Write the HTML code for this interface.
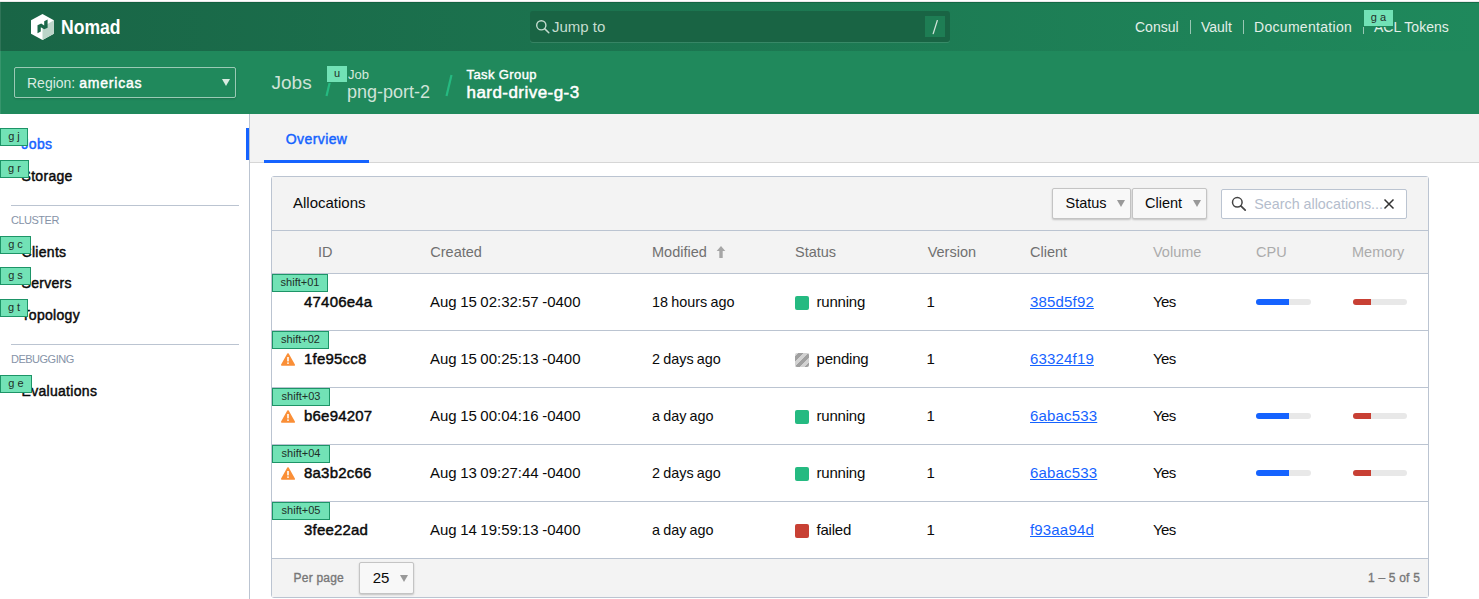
<!DOCTYPE html>
<html><head><meta charset="utf-8"><title>Nomad</title>
<style>
html,body{margin:0;padding:0;}
body{width:1479px;height:599px;overflow:hidden;position:relative;background:#fff;font-family:"Liberation Sans",sans-serif;}
.t{position:absolute;white-space:nowrap;}
.r{position:absolute;}
.bd{position:absolute;background:#72e2b6;border:1px solid #1d9467;color:#1f2f28;text-align:center;font-family:"Liberation Sans",sans-serif;white-space:nowrap;}
u{text-decoration-thickness:1px;text-underline-offset:1px;}
</style></head><body>
<div class="r" style="left:0px;top:0px;width:1479px;height:1px;background:#ffffff"></div>
<div class="r" style="left:0px;top:1px;width:1479px;height:1px;background:#ebe8ea"></div>
<div class="r" style="left:0px;top:2px;width:1479px;height:49px;background:linear-gradient(to right,#196546 0%,#1f895c 100%)"></div>
<div class="r" style="left:0px;top:2px;width:1479px;height:1px;background:#0f5a3a;opacity:.6"></div>
<svg class="r" style="left:28px;top:12px" width="30" height="30" viewBox="0 0 30 30">
<polygon points="14.5,2 25.8,8.3 25.8,21.8 14.5,28 3,21.8 3,8.3" fill="#ffffff"/>
<polygon points="14.5,15 25.8,8.3 25.8,21.8 14.5,28" fill="#bcd5c9"/>
<path d="M9.5,21.2 L9.5,13.2 L13.2,11.5 L16.2,13.4 L16.2,9.2 L19.6,7.6 L19.6,15.7 L16.2,17.3 L12.8,15.2 L12.8,19.6 Z" fill="#1a6748"/>
</svg>
<div class="t " style="left:61px;top:15.07px;font-size:20px;line-height:24px;font-weight:700;color:#ffffff;transform:scaleX(0.878);transform-origin:0 0">Nomad</div>
<div class="r" style="left:530px;top:11px;width:420px;height:31px;background:#196444;border-radius:3px;box-shadow:0 1px 0 rgba(255,255,255,0.12)"></div>
<svg class="r" style="left:535px;top:19px" width="16" height="16" viewBox="0 0 16 16">
<circle cx="6.3" cy="6.3" r="4.6" fill="none" stroke="#c5dccf" stroke-width="1.4"/>
<line x1="9.6" y1="9.6" x2="13.8" y2="13.8" stroke="#c5dccf" stroke-width="1.5" stroke-linecap="round"/>
</svg>
<div class="t " style="left:552px;top:17.80px;font-size:15px;line-height:18px;font-weight:400;color:#c5dccf;">Jump to</div>
<div class="r" style="left:925px;top:16px;width:20px;height:21px;background:#1e7d54"></div>
<svg class="r" style="left:925px;top:16px" width="20" height="21" viewBox="0 0 20 21"><line x1="12.3" y1="4.6" x2="8.2" y2="17.6" stroke="#d2e4da" stroke-width="1.3" stroke-linecap="round"/></svg>
<div class="t " style="left:1135px;top:19.45px;font-size:14px;line-height:17px;font-weight:400;color:#e3efe8;">Consul</div>
<div class="r" style="left:1190px;top:20px;width:1px;height:14px;background:rgba(255,255,255,.55)"></div>
<div class="t " style="left:1201px;top:19.45px;font-size:14px;line-height:17px;font-weight:400;color:#e3efe8;">Vault</div>
<div class="r" style="left:1243px;top:20px;width:1px;height:14px;background:rgba(255,255,255,.55)"></div>
<div class="t " style="left:1254px;top:19.45px;font-size:14px;line-height:17px;font-weight:400;color:#e3efe8;letter-spacing:0.3px">Documentation</div>
<div class="r" style="left:1363px;top:20px;width:1px;height:14px;background:rgba(255,255,255,.55)"></div>
<div class="t " style="left:1374px;top:19.45px;font-size:14px;line-height:17px;font-weight:400;color:#e3efe8;">ACL Tokens</div>
<div class="bd" style="left:1363px;top:9px;width:29px;height:16px;font-size:11px;line-height:16px;border-color:#1f8659;"><span style="position:relative;top:-0.8px">g a</span></div>
<div class="r" style="left:0px;top:51px;width:1479px;height:63px;background:#20895c"></div>
<div class="r" style="left:14px;top:67px;width:222px;height:31px;border:1px solid rgba(255,255,255,.55);border-radius:2px;box-sizing:border-box;box-shadow:0 1px 2px rgba(0,0,0,.15)"></div>
<div class="t " style="left:27px;top:74.65px;font-size:14px;line-height:17px;font-weight:400;color:#d9ebe1;">Region: <span style="color:#fff;letter-spacing:0.8px;-webkit-text-stroke:0.45px #fff">americas</span></div>
<svg class="r" style="left:222px;top:79px" width="8" height="7" viewBox="0 0 8 7"><polygon points="0,0 8,0 4,7" fill="#d9ebe1"/></svg>
<div class="t " style="left:271.5px;top:71.11px;font-size:19px;line-height:23px;font-weight:400;color:#cfe3d8;">Jobs</div>
<svg class="r" style="left:324px;top:74px" width="10" height="23" viewBox="0 0 10 23"><line x1="7.5" y1="1" x2="2.5" y2="22" stroke="#25ba81" stroke-width="2.2"/></svg>
<div class="t " style="left:348px;top:67.49px;font-size:13px;line-height:16px;font-weight:400;color:#d6e9de;">Job</div>
<div class="t " style="left:347px;top:80.76px;font-size:18px;line-height:22px;font-weight:400;color:#cfe3d8;">png-port-2</div>
<div class="bd" style="left:326px;top:65px;width:20px;height:16px;font-size:11px;line-height:16px;border-color:#20895c;"><span style="position:relative;top:-0.8px">u</span></div>
<svg class="r" style="left:444px;top:74px" width="10" height="23" viewBox="0 0 10 23"><line x1="7.5" y1="1" x2="2.5" y2="22" stroke="#25ba81" stroke-width="2.2"/></svg>
<div class="t " style="left:466.5px;top:67.49px;font-size:13px;line-height:16px;font-weight:400;color:#ffffff;-webkit-text-stroke:0.4px #ffffff;letter-spacing:0.4px">Task Group</div>
<div class="t " style="left:466.5px;top:83.11px;font-size:17px;line-height:20px;font-weight:400;color:#ffffff;-webkit-text-stroke:0.5px #ffffff;letter-spacing:0.45px">hard-drive-g-3</div>
<div class="r" style="left:0px;top:2px;width:1px;height:112px;background:rgba(255,255,255,.1)"></div>
<div class="r" style="left:249px;top:114px;width:1px;height:485px;background:#bbc4d1"></div>
<div class="r" style="left:246px;top:128px;width:3px;height:32px;background:#1563ff"></div>
<div class="t " style="left:21.5px;top:136.35px;font-size:14px;line-height:17px;font-weight:400;color:#1563ff;-webkit-text-stroke:0.45px #1563ff;letter-spacing:0.3px">Jobs</div>
<div class="bd" style="left:0px;top:128px;width:26px;height:16px;font-size:11px;line-height:16px;"><span style="position:relative;top:-0.8px">g j</span></div>
<div class="t " style="left:21.5px;top:168.45px;font-size:14px;line-height:17px;font-weight:400;color:#0a0a0a;-webkit-text-stroke:0.45px #0a0a0a;letter-spacing:0.3px">Storage</div>
<div class="bd" style="left:0px;top:160px;width:27px;height:16px;font-size:11px;line-height:16px;"><span style="position:relative;top:-0.8px">g r</span></div>
<div class="r" style="left:11px;top:205px;width:228px;height:1px;background:#bbc4d1"></div>
<div class="t " style="left:11px;top:213.99px;font-size:11px;line-height:13px;font-weight:400;color:#8693a8;letter-spacing:-0.5px">CLUSTER</div>
<div class="t " style="left:21.5px;top:243.95px;font-size:14px;line-height:17px;font-weight:400;color:#0a0a0a;-webkit-text-stroke:0.45px #0a0a0a;letter-spacing:0.3px">Clients</div>
<div class="bd" style="left:0px;top:236px;width:29px;height:16px;font-size:11px;line-height:16px;"><span style="position:relative;top:-0.8px">g c</span></div>
<div class="t " style="left:21.5px;top:275.45px;font-size:14px;line-height:17px;font-weight:400;color:#0a0a0a;-webkit-text-stroke:0.45px #0a0a0a;letter-spacing:0.3px">Servers</div>
<div class="bd" style="left:0px;top:267px;width:29px;height:16px;font-size:11px;line-height:16px;"><span style="position:relative;top:-0.8px">g s</span></div>
<div class="t " style="left:21.5px;top:306.95px;font-size:14px;line-height:17px;font-weight:400;color:#0a0a0a;-webkit-text-stroke:0.45px #0a0a0a;letter-spacing:0.3px">Topology</div>
<div class="bd" style="left:0px;top:299px;width:26px;height:16px;font-size:11px;line-height:16px;"><span style="position:relative;top:-0.8px">g t</span></div>
<div class="r" style="left:11px;top:344px;width:228px;height:1px;background:#bbc4d1"></div>
<div class="t " style="left:11px;top:352.59px;font-size:11px;line-height:13px;font-weight:400;color:#8693a8;letter-spacing:-0.5px">DEBUGGING</div>
<div class="t " style="left:21.5px;top:382.65px;font-size:14px;line-height:17px;font-weight:400;color:#0a0a0a;-webkit-text-stroke:0.45px #0a0a0a;letter-spacing:0.3px">Evaluations</div>
<div class="bd" style="left:0px;top:375px;width:30px;height:16px;font-size:11px;line-height:16px;"><span style="position:relative;top:-0.8px">g e</span></div>
<div class="r" style="left:250px;top:114px;width:1229px;height:48px;background:#f3f3f3"></div>
<div class="r" style="left:250px;top:162px;width:1229px;height:1px;background:#d6d6d6"></div>
<div class="r" style="left:264px;top:160px;width:105px;height:3px;background:#1563ff"></div>
<div class="t " style="left:285.8px;top:131.45px;font-size:14px;line-height:17px;font-weight:400;color:#1563ff;-webkit-text-stroke:0.45px #1563ff;letter-spacing:0.4px">Overview</div>
<div class="r" style="left:271px;top:176px;width:1158px;height:422px;border:1px solid #bbc4d1;border-radius:3px;box-sizing:border-box;background:#fff;overflow:hidden"></div>
<div class="r" style="left:272px;top:177px;width:1156px;height:54px;background:#f3f3f3"></div>
<div class="t " style="left:293px;top:193.80px;font-size:15px;line-height:18px;font-weight:400;color:#0a0a0a;">Allocations</div>
<div class="r" style="left:1052px;top:188px;width:79px;height:31px;background:#f8f8f8;border:1px solid #c4c4c4;border-radius:2px;box-sizing:border-box;box-shadow:0 1px 2px rgba(0,0,0,.2)"></div>
<div class="t " style="left:1065.5px;top:195.47px;font-size:14.5px;line-height:17px;font-weight:400;color:#0a0a0a;">Status</div>
<svg class="r" style="left:1117px;top:200px" width="8" height="7" viewBox="0 0 8 7"><polygon points="0,0 8,0 4,7" fill="#999"/></svg>
<div class="r" style="left:1132px;top:188px;width:75px;height:31px;background:#f8f8f8;border:1px solid #c4c4c4;border-radius:2px;box-sizing:border-box;box-shadow:0 1px 2px rgba(0,0,0,.2)"></div>
<div class="t " style="left:1145px;top:195.47px;font-size:14.5px;line-height:17px;font-weight:400;color:#0a0a0a;">Client</div>
<svg class="r" style="left:1193px;top:200px" width="8" height="7" viewBox="0 0 8 7"><polygon points="0,0 8,0 4,7" fill="#999"/></svg>
<div class="r" style="left:1221px;top:189px;width:186px;height:30px;background:#fff;border:1px solid #bbc4d1;border-radius:2px;box-sizing:border-box"></div>
<svg class="r" style="left:1231px;top:196px" width="16" height="16" viewBox="0 0 16 16">
<circle cx="6.3" cy="6.3" r="4.8" fill="none" stroke="#444" stroke-width="1.5"/>
<line x1="9.8" y1="9.8" x2="14.2" y2="14.2" stroke="#444" stroke-width="1.7" stroke-linecap="round"/>
</svg>
<div class="t " style="left:1254.3px;top:196.04px;font-size:14.3px;line-height:17px;font-weight:400;color:#b4bdcc;">Search allocations...</div>
<svg class="r" style="left:1383px;top:198px" width="12" height="12" viewBox="0 0 12 12"><path d="M1.5,1.5 L10.5,10.5 M10.5,1.5 L1.5,10.5" stroke="#333" stroke-width="1.5"/></svg>
<div class="r" style="left:272px;top:230px;width:1156px;height:1px;background:#bbc4d1"></div>
<div class="r" style="left:272px;top:231px;width:1156px;height:42px;background:#f3f3f3"></div>
<div class="r" style="left:272px;top:273px;width:1156px;height:1px;background:#bbc4d1"></div>
<div class="t " style="left:318px;top:244.47px;font-size:14.5px;line-height:17px;font-weight:400;color:#707070;">ID</div>
<div class="t " style="left:430.3px;top:244.47px;font-size:14.5px;line-height:17px;font-weight:400;color:#707070;">Created</div>
<div class="t " style="left:652px;top:244.47px;font-size:14.5px;line-height:17px;font-weight:400;color:#707070;">Modified</div>
<svg class="r" style="left:716px;top:246px" width="10" height="12" viewBox="0 0 10 12"><polygon points="5,0 9.3,5 6.7,5 6.7,12 3.3,12 3.3,5 0.7,5" fill="#a6a6a6"/></svg>
<div class="t " style="left:795px;top:244.47px;font-size:14.5px;line-height:17px;font-weight:400;color:#707070;">Status</div>
<div class="t " style="left:927.7px;top:244.47px;font-size:14.5px;line-height:17px;font-weight:400;color:#707070;">Version</div>
<div class="t " style="left:1030px;top:244.47px;font-size:14.5px;line-height:17px;font-weight:400;color:#707070;">Client</div>
<div class="t " style="left:1153px;top:244.47px;font-size:14.5px;line-height:17px;font-weight:400;color:#ababab;">Volume</div>
<div class="t " style="left:1256px;top:244.47px;font-size:14.5px;line-height:17px;font-weight:400;color:#ababab;">CPU</div>
<div class="t " style="left:1352px;top:244.47px;font-size:14.5px;line-height:17px;font-weight:400;color:#ababab;">Memory</div>
<div class="bd" style="left:272px;top:274px;width:54px;height:16px;font-size:11px;line-height:16px;"><span style="position:relative;top:-0.8px">shift+01</span></div>
<div class="t " style="left:304px;top:292.80px;font-size:15px;line-height:18px;font-weight:400;color:#0a0a0a;-webkit-text-stroke:0.45px #0a0a0a;letter-spacing:0.2px">47406e4a</div>
<div class="t " style="left:430px;top:292.80px;font-size:15px;line-height:18px;font-weight:400;color:#0a0a0a;word-spacing:-0.7px">Aug 15 02:32:57 -0400</div>
<div class="t " style="left:652px;top:293.51px;font-size:14.4px;line-height:17px;font-weight:400;color:#0a0a0a;word-spacing:-0.8px">18 hours ago</div>
<div class="r" style="left:795px;top:296px;width:14px;height:14px;background:#25ba81;border-radius:2px"></div>
<div class="t " style="left:816.5px;top:292.80px;font-size:15px;line-height:18px;font-weight:400;color:#0a0a0a;letter-spacing:-0.2px">running</div>
<div class="t " style="left:926.5px;top:292.80px;font-size:15px;line-height:18px;font-weight:400;color:#0a0a0a;">1</div>
<div class="t " style="left:1030px;top:292.80px;font-size:15px;line-height:18px;font-weight:400;color:#1563ff;letter-spacing:0.17px"><u>385d5f92</u></div>
<div class="t " style="left:1153px;top:292.80px;font-size:15px;line-height:18px;font-weight:400;color:#0a0a0a;letter-spacing:-0.6px">Yes</div>
<div class="r" style="left:1256px;top:299px;width:55px;height:6px;background:#e8e8e8;border-radius:3px;overflow:hidden"></div>
<div class="r" style="left:1256px;top:299px;width:33px;height:6px;background:#1563ff;border-radius:3px 0 0 3px"></div>
<div class="r" style="left:1353px;top:299px;width:54px;height:6px;background:#e8e8e8;border-radius:3px"></div>
<div class="r" style="left:1353px;top:299px;width:18px;height:6px;background:#c84034;border-radius:3px 0 0 3px"></div>
<div class="r" style="left:272px;top:330px;width:1156px;height:1px;background:#bbc4d1"></div>
<div class="bd" style="left:272px;top:331px;width:55px;height:16px;font-size:11px;line-height:16px;"><span style="position:relative;top:-0.8px">shift+02</span></div>
<svg class="r" style="left:281px;top:353px" width="14" height="13" viewBox="0 0 14 13"><path d="M7,1 L13.2,12 L0.8,12 Z" fill="#fa8f37" stroke="#fa8f37" stroke-width="1.6" stroke-linejoin="round"/><rect x="6.2" y="4" width="1.6" height="4.4" fill="#fff"/><rect x="6.2" y="9.4" width="1.6" height="1.5" fill="#fff"/></svg>
<div class="t " style="left:304px;top:349.80px;font-size:15px;line-height:18px;font-weight:400;color:#0a0a0a;-webkit-text-stroke:0.45px #0a0a0a;letter-spacing:0.2px">1fe95cc8</div>
<div class="t " style="left:430px;top:349.80px;font-size:15px;line-height:18px;font-weight:400;color:#0a0a0a;word-spacing:-0.7px">Aug 15 00:25:13 -0400</div>
<div class="t " style="left:652px;top:350.51px;font-size:14.4px;line-height:17px;font-weight:400;color:#0a0a0a;word-spacing:-0.8px">2 days ago</div>
<div class="r" style="left:795px;top:353px;width:14px;height:14px;background:repeating-linear-gradient(-45deg,#a0a0a0 0 3.4px,#d2d2d2 3.4px 6.8px);border-radius:2px"></div>
<div class="t " style="left:816.5px;top:349.80px;font-size:15px;line-height:18px;font-weight:400;color:#0a0a0a;letter-spacing:-0.2px">pending</div>
<div class="t " style="left:926.5px;top:349.80px;font-size:15px;line-height:18px;font-weight:400;color:#0a0a0a;">1</div>
<div class="t " style="left:1030px;top:349.80px;font-size:15px;line-height:18px;font-weight:400;color:#1563ff;letter-spacing:0.17px"><u>63324f19</u></div>
<div class="t " style="left:1153px;top:349.80px;font-size:15px;line-height:18px;font-weight:400;color:#0a0a0a;letter-spacing:-0.6px">Yes</div>
<div class="r" style="left:272px;top:387px;width:1156px;height:1px;background:#bbc4d1"></div>
<div class="bd" style="left:272px;top:388px;width:56px;height:16px;font-size:11px;line-height:16px;"><span style="position:relative;top:-0.8px">shift+03</span></div>
<svg class="r" style="left:281px;top:410px" width="14" height="13" viewBox="0 0 14 13"><path d="M7,1 L13.2,12 L0.8,12 Z" fill="#fa8f37" stroke="#fa8f37" stroke-width="1.6" stroke-linejoin="round"/><rect x="6.2" y="4" width="1.6" height="4.4" fill="#fff"/><rect x="6.2" y="9.4" width="1.6" height="1.5" fill="#fff"/></svg>
<div class="t " style="left:304px;top:406.80px;font-size:15px;line-height:18px;font-weight:400;color:#0a0a0a;-webkit-text-stroke:0.45px #0a0a0a;letter-spacing:0.2px">b6e94207</div>
<div class="t " style="left:430px;top:406.80px;font-size:15px;line-height:18px;font-weight:400;color:#0a0a0a;word-spacing:-0.7px">Aug 15 00:04:16 -0400</div>
<div class="t " style="left:652px;top:407.51px;font-size:14.4px;line-height:17px;font-weight:400;color:#0a0a0a;word-spacing:-0.8px">a day ago</div>
<div class="r" style="left:795px;top:410px;width:14px;height:14px;background:#25ba81;border-radius:2px"></div>
<div class="t " style="left:816.5px;top:406.80px;font-size:15px;line-height:18px;font-weight:400;color:#0a0a0a;letter-spacing:-0.2px">running</div>
<div class="t " style="left:926.5px;top:406.80px;font-size:15px;line-height:18px;font-weight:400;color:#0a0a0a;">1</div>
<div class="t " style="left:1030px;top:406.80px;font-size:15px;line-height:18px;font-weight:400;color:#1563ff;letter-spacing:0.17px"><u>6abac533</u></div>
<div class="t " style="left:1153px;top:406.80px;font-size:15px;line-height:18px;font-weight:400;color:#0a0a0a;letter-spacing:-0.6px">Yes</div>
<div class="r" style="left:1256px;top:413px;width:55px;height:6px;background:#e8e8e8;border-radius:3px;overflow:hidden"></div>
<div class="r" style="left:1256px;top:413px;width:33px;height:6px;background:#1563ff;border-radius:3px 0 0 3px"></div>
<div class="r" style="left:1353px;top:413px;width:54px;height:6px;background:#e8e8e8;border-radius:3px"></div>
<div class="r" style="left:1353px;top:413px;width:18px;height:6px;background:#c84034;border-radius:3px 0 0 3px"></div>
<div class="r" style="left:272px;top:444px;width:1156px;height:1px;background:#bbc4d1"></div>
<div class="bd" style="left:272px;top:445px;width:56px;height:16px;font-size:11px;line-height:16px;"><span style="position:relative;top:-0.8px">shift+04</span></div>
<svg class="r" style="left:281px;top:467px" width="14" height="13" viewBox="0 0 14 13"><path d="M7,1 L13.2,12 L0.8,12 Z" fill="#fa8f37" stroke="#fa8f37" stroke-width="1.6" stroke-linejoin="round"/><rect x="6.2" y="4" width="1.6" height="4.4" fill="#fff"/><rect x="6.2" y="9.4" width="1.6" height="1.5" fill="#fff"/></svg>
<div class="t " style="left:304px;top:463.80px;font-size:15px;line-height:18px;font-weight:400;color:#0a0a0a;-webkit-text-stroke:0.45px #0a0a0a;letter-spacing:0.2px">8a3b2c66</div>
<div class="t " style="left:430px;top:463.80px;font-size:15px;line-height:18px;font-weight:400;color:#0a0a0a;word-spacing:-0.7px">Aug 13 09:27:44 -0400</div>
<div class="t " style="left:652px;top:464.51px;font-size:14.4px;line-height:17px;font-weight:400;color:#0a0a0a;word-spacing:-0.8px">2 days ago</div>
<div class="r" style="left:795px;top:467px;width:14px;height:14px;background:#25ba81;border-radius:2px"></div>
<div class="t " style="left:816.5px;top:463.80px;font-size:15px;line-height:18px;font-weight:400;color:#0a0a0a;letter-spacing:-0.2px">running</div>
<div class="t " style="left:926.5px;top:463.80px;font-size:15px;line-height:18px;font-weight:400;color:#0a0a0a;">1</div>
<div class="t " style="left:1030px;top:463.80px;font-size:15px;line-height:18px;font-weight:400;color:#1563ff;letter-spacing:0.17px"><u>6abac533</u></div>
<div class="t " style="left:1153px;top:463.80px;font-size:15px;line-height:18px;font-weight:400;color:#0a0a0a;letter-spacing:-0.6px">Yes</div>
<div class="r" style="left:1256px;top:470px;width:55px;height:6px;background:#e8e8e8;border-radius:3px;overflow:hidden"></div>
<div class="r" style="left:1256px;top:470px;width:33px;height:6px;background:#1563ff;border-radius:3px 0 0 3px"></div>
<div class="r" style="left:1353px;top:470px;width:54px;height:6px;background:#e8e8e8;border-radius:3px"></div>
<div class="r" style="left:1353px;top:470px;width:18px;height:6px;background:#c84034;border-radius:3px 0 0 3px"></div>
<div class="r" style="left:272px;top:501px;width:1156px;height:1px;background:#bbc4d1"></div>
<div class="bd" style="left:272px;top:502px;width:56px;height:16px;font-size:11px;line-height:16px;"><span style="position:relative;top:-0.8px">shift+05</span></div>
<div class="t " style="left:304px;top:520.80px;font-size:15px;line-height:18px;font-weight:400;color:#0a0a0a;-webkit-text-stroke:0.45px #0a0a0a;letter-spacing:0.2px">3fee22ad</div>
<div class="t " style="left:430px;top:520.80px;font-size:15px;line-height:18px;font-weight:400;color:#0a0a0a;word-spacing:-0.7px">Aug 14 19:59:13 -0400</div>
<div class="t " style="left:652px;top:521.51px;font-size:14.4px;line-height:17px;font-weight:400;color:#0a0a0a;word-spacing:-0.8px">a day ago</div>
<div class="r" style="left:795px;top:524px;width:14px;height:14px;background:#c84034;border-radius:2px"></div>
<div class="t " style="left:816.5px;top:520.80px;font-size:15px;line-height:18px;font-weight:400;color:#0a0a0a;letter-spacing:-0.2px">failed</div>
<div class="t " style="left:926.5px;top:520.80px;font-size:15px;line-height:18px;font-weight:400;color:#0a0a0a;">1</div>
<div class="t " style="left:1030px;top:520.80px;font-size:15px;line-height:18px;font-weight:400;color:#1563ff;letter-spacing:0.17px"><u>f93aa94d</u></div>
<div class="t " style="left:1153px;top:520.80px;font-size:15px;line-height:18px;font-weight:400;color:#0a0a0a;letter-spacing:-0.6px">Yes</div>
<div class="r" style="left:272px;top:558px;width:1156px;height:1px;background:#bbc4d1"></div>
<div class="r" style="left:272px;top:559px;width:1156px;height:38px;background:#f3f3f3"></div>
<div class="t " style="left:293.6px;top:570.84px;font-size:12px;line-height:14px;font-weight:400;color:#777;-webkit-text-stroke:0.35px #777;letter-spacing:0.2px">Per page</div>
<div class="r" style="left:359px;top:562px;width:55px;height:32px;background:#f8f8f8;border:1px solid #c4c4c4;border-radius:2px;box-sizing:border-box;box-shadow:0 1px 2px rgba(0,0,0,.2)"></div>
<div class="t " style="left:372.7px;top:568.80px;font-size:15px;line-height:18px;font-weight:400;color:#0a0a0a;">25</div>
<svg class="r" style="left:400px;top:575px" width="8" height="7" viewBox="0 0 8 7"><polygon points="0,0 8,0 4,7" fill="#999"/></svg>
<div class="t " style="left:1368px;top:570.84px;font-size:12px;line-height:14px;font-weight:400;color:#777;-webkit-text-stroke:0.35px #777;letter-spacing:0.2px">1 &ndash; 5 of 5</div>
</body></html>
